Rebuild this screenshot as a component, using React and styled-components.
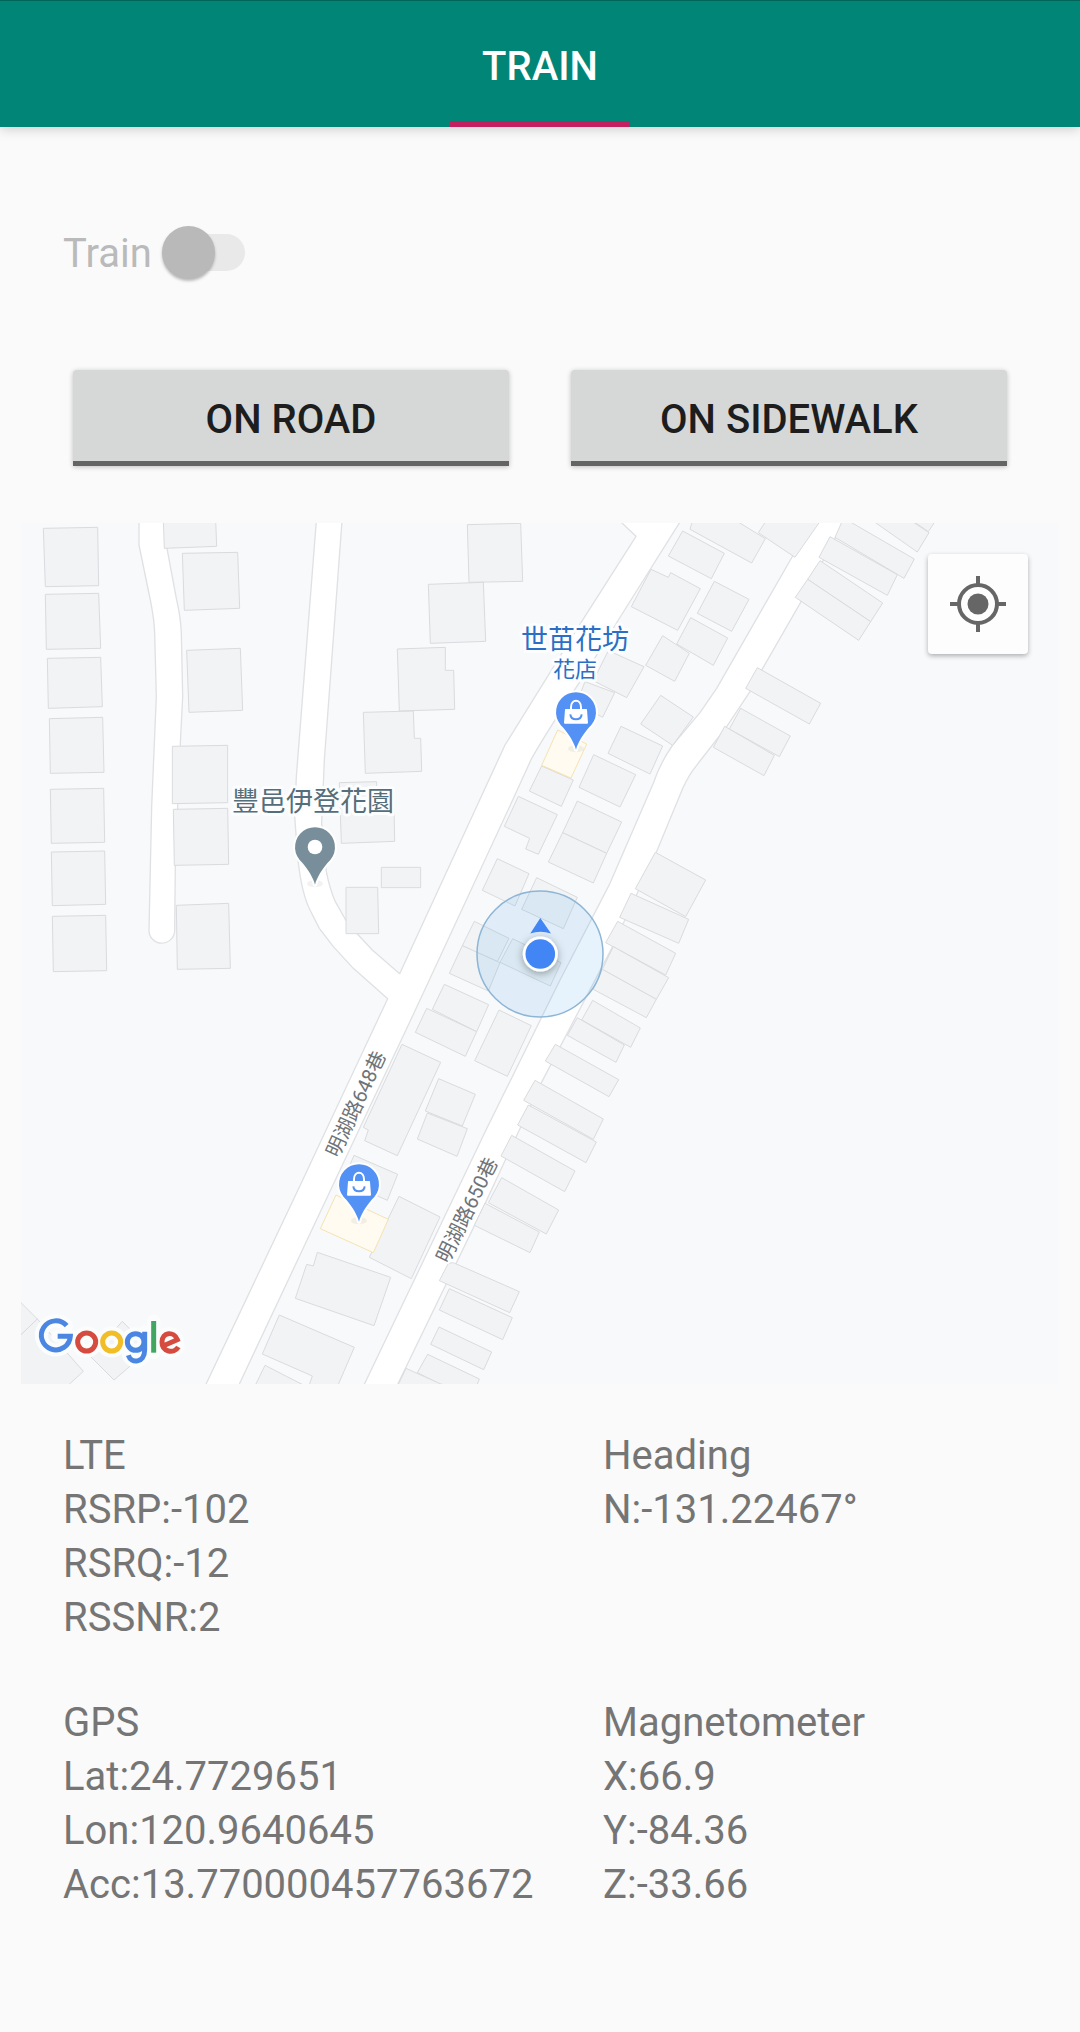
import React from "react";
import styled, { createGlobalStyle } from "styled-components";

const GlobalStyle = createGlobalStyle`
  *, *::before, *::after { box-sizing: border-box; }
  body {
    margin: 0;
    background: #fafafa;
    font-family: Roboto, "Noto Sans CJK TC", sans-serif;
    font-size: 40px;
    line-height: 54px;
    color: #757575;
  }
`;

const Page = styled.div`
  display: flex;
  flex-direction: column;
  min-height: 100vh;
`;

const TabBar = styled.nav`
  display: flex;
  justify-content: center;
  background: #018577;
  border-top: 1px solid #016459;
  box-shadow: 0 1px 12px rgba(0, 0, 0, 0.22);
`;

const Tab = styled.button`
  width: 180px;
  height: 126px;
  padding: 6px 0 0;
  border: 0;
  background: transparent;
  box-shadow: inset 0 -6px 0 #c4205f;
  color: #fff;
  font: inherit;
  font-weight: 500;
`;

const SwitchRow = styled.label`
  display: flex;
  align-items: center;
  gap: 10px;
  padding: 96px 63px 0;
  color: #bababa;
`;

const SwitchText = styled.span`
  padding-top: 4px;
`;

const Switch = styled.input`
  appearance: none;
  position: relative;
  width: 83px;
  height: 53px;
  margin: 0;

  &::before {
    content: "";
    position: absolute;
    inset: 8px 0 8px 16px;
    border-radius: 19px;
    background: #e9e9e9;
  }

  &::after {
    content: "";
    position: absolute;
    left: 0;
    top: 0;
    width: 53px;
    height: 53px;
    border-radius: 50%;
    background: #b9b9b9;
    box-shadow: 0 2px 3px rgba(0, 0, 0, 0.26);
  }
`;

const Actions = styled.div`
  display: grid;
  grid-template-columns: 1fr 1fr;
  gap: 62px;
  padding: 89px 73px 57px;
`;

const ActionButton = styled.button`
  height: 96px;
  padding: 9px 0 0;
  border: 0;
  border-bottom: 5px solid #646464;
  border-radius: 4px 4px 0 0;
  background: #d6d8d7;
  box-shadow: 0 1px 5px rgba(0, 0, 0, 0.24);
  color: #1d1d1d;
  font: inherit;
  font-weight: 500;
`;

const MapFrame = styled.section`
  position: relative;
  margin: 0 21px;
  aspect-ratio: 1038 / 861;
  overflow: hidden;
  background: #f8f9fb;
`;

const MapCanvas = styled.svg`
  display: block;
  width: 100%;
  height: 100%;
`;

const Buildings = styled.g`
  fill: #f1f3f4;
  stroke: #dadbde;

  polygon { vector-effect: non-scaling-stroke; }
`;

const Shops = styled(Buildings)`
  fill: #fffbf0;
  stroke: #f5e3b0;
`;

const Roads = styled.g`
  fill: #fff;
  stroke: #e0e1e4;
  stroke-width: 4;
  stroke-linejoin: round;
`;

const PlaceLabel = styled.text`
  font-size: 27px;
  fill: ${(p) => p.$color};
  text-anchor: middle;
  stroke: #fcfdfe;
  stroke-width: 6px;
  stroke-linejoin: round;
  paint-order: stroke;
  font-family: "Noto Sans CJK TC", sans-serif;
`;

const PlaceKind = styled.tspan`
  font-size: 22px;
`;

const StreetLabel = styled.text`
  font-size: 20px;
  fill: #6f7377;
  text-anchor: middle;
  dominant-baseline: central;
  stroke: #fff;
  stroke-width: 4px;
  stroke-linejoin: round;
  paint-order: stroke;
  font-family: Roboto, "Noto Sans CJK TC", sans-serif;
`;

const LocateButton = styled.button`
  position: absolute;
  top: 31px;
  right: 31px;
  display: grid;
  place-items: center;
  width: 100px;
  height: 100px;
  padding: 0;
  border: 0;
  border-radius: 4px;
  background: #fdfdfd;
  box-shadow: 0 2px 5px rgba(0, 0, 0, 0.3);
`;

const Readings = styled.section`
  display: grid;
  grid-template-columns: 1fr 1fr;
  row-gap: 51px;
  padding: 45px 0;
`;

const Reading = styled.div`
  padding-left: 63px;
`;

const Line = styled.p`
  margin: 0;
`;

// Each sheet covers one part of the district and is drawn at three units per pixel.
const SHEETS = [
  {
    x: 20, y: 520,
    lots: [
      "70,25 233,22 236,197 76,200", "76,223 236,220 242,385 79,388",
      "82,415 242,412 247,560 85,565", "88,596 248,592 252,757 91,760",
      "91,808 251,805 254,967 94,970", "94,996 254,993 257,1153 97,1157",
      "97,1189 257,1186 260,1352 100,1355", "430,0 587,0 590,79 433,85",
      "487,100 653,97 659,265 493,271", "500,391 661,385 668,571 507,577",
      "457,679 623,676 623,848 457,851", "460,868 623,865 626,1033 463,1036",
      "469,1156 626,1150 631,1345 472,1348", "978,1102 1073,1102 1076,1241 978,1241",
      "958,788 1070,785 1070,815 1121,812 1124,964 964,970",
    ],
  },
  {
    x: 380, y: 520,
    lots: [
      "262,14 422,10 428,184 267,187", "145,193 310,187 317,364 151,370",
      "52,387 196,382 196,451 221,451 224,568 58,573",
      "-50,577 100,573 103,655 122,655 125,754 -44,760", "4,1042 122,1042 122,1103 4,1103",
      "938,0 930,28 1115,129 1156,56 1065,0", "908,33 1033,100 994,176 865,108",
      "813,148 865,172 872,158 961,206 893,331 754,260",
      "932,293 1043,354 1000,436 890,372", "848,347 928,400 884,484 797,436",
      "685,392 792,440 740,533 640,482", "615,485 704,518 668,592 590,550",
      "842,526 940,591 878,676 782,612", "723,619 848,678 810,762 684,700",
      "485,738 580,780 544,859 448,813", "641,704 767,764 720,861 597,802",
      "415,829 532,884 475,1003 437,987 449,955 373,919",
      "592,843 725,906 680,1000 548,938", "548,938 680,1000 640,1089 505,1026",
      "352,1016 447,1061 405,1158 307,1111", "470,1073 592,1132 550,1226 425,1168",
    ],
    shops: ["533,630 620,672 573,774 485,736"],
  },
  {
    x: 700, y: 520,
    lots: [
      "200,0 175,38 285,112 363,0", "43,184 147,238 95,334 -8,280",
      "428,0 441,0 643,117 612,175 405,52", "390,50 592,164 562,226 357,112",
      "360,122 548,249 512,305 323,178", "323,178 512,305 476,361 286,232",
      "172,443 362,550 328,612 137,505", "122,565 271,648 238,710 88,627",
      "74,619 223,706 192,767 40,682", "515,0 652,96 687,38 630,0", "635,0 685,35 708,0",
    ],
  },
  {
    x: 380, y: 800,
    lots: [
      "283,364 387,415 352,485 247,437", "247,437 360,488 325,573 208,520",
      "398,416 543,488 511,558 360,487", "193,553 326,614 290,695 157,628",
      "140,625 290,695 256,769 106,697", "357,630 454,677 382,829 284,782",
      "826,157 977,240 917,350 766,266", "753,280 926,358 896,430 719,352",
      "713,364 887,460 857,525 677,428", "700,440 866,533 829,598 667,508",
      "667,508 829,598 799,653 640,568", "638,601 781,684 752,742 605,660",
      "592,653 733,735 708,787 562,706", "526,733 716,839 687,890 496,783",
    ],
  },
  {
    x: 300, y: 1020,
    lots: [
      "705,181 910,297 880,358 671,241", "685,255 889,366 858,428 653,315",
      "635,346 825,453 794,515 603,408", "605,473 776,570 739,642 565,548",
      "555,550 718,636 690,698 523,616", "460,728 658,815 629,878 418,782 445,730",
      "448,806 637,893 608,959 418,870", "417,921 575,996 551,1049 392,973",
      "383,1003 538,1077 525,1110 420,1092 352,1058", "318,1045 440,1100 292,1100",
      "306,73 422,127 292,407 194,362 205,330 190,322", "416,176 526,223 487,318 376,273",
      "382,279 502,326 471,409 352,357", "162,406 293,463 262,541 130,482",
      "297,529 420,591 334,776 208,712",
    ],
    shops: ["108,525 265,598 220,698 61,626"],
  },
  {
    x: 20, y: 1180,
    lots: [
      "892,217 1112,292 1062,437 826,355 860,253 880,258",
      "778,405 1003,502 952,620 866,620 877,588 727,522", "735,556 860,620 704,620",
      "-5,360 52,417 -5,472", "52,417 190,574 140,620 0,620 -5,472",
      "307,424 388,508 282,600 212,530",
    ],
  },
];

const sheetTransform = (s) => `translate(${s.x} ${s.y}) scale(${1 / 3})`;

function RoadNetwork() {
  return (
    <Roads>
      <g transform="translate(20 520) scale(.33333)">
        <path d="M357 -10V75L391 240Q403 300 404 340L409 530L403 670L395 860L387 1230A38 38 0 0 0 464 1232L466 1036L473 860L481 670L488 530L484 340Q482 290 469 235L441 85L433 -10Z" />
      </g>
      <g transform="translate(380 520) scale(.33333)">
        <path d="M1306 -10L1238 108L1010 505L960 578L878 675Q840 730 820 790L690 1090L540 1380L318 1830L-60 2620H40L318 2045L483 1690L695 1285L829 997L900 825Q918 780 938 752L960 723L1040 620L1110 515L1148 445L1262 247L1400 -10Z" />
        <path d="M708 -8L768 49L603 308L375 675L59 1361L-23 1290L-70 1240L-103 1200L-134 1145Q-150 1110 -161 1055L-175 910L-167 720L-113 -10H-190L-251 770L-256 890L-246 1020Q-235 1120 -210 1170L-182 1225L-140 1280L-80 1345L23 1436L-7 1500L-240 1997L-535 2620H-435L-240 2205L92 1500L148 1380L398 840L455 715Q510 620 610 470L715 300L910 -10Z" />
      </g>
    </Roads>
  );
}

function Pin({ x, y, color, shop }) {
  return (
    <g transform={`translate(${x} ${y}) scale(.33333)`}>
      <ellipse cx="0" cy="110" rx="24" ry="11" fill="#000" opacity=".05" />
      <path
        d="M0 113C-5 92 -20 69 -38 47A60 60 0 1 1 38 47C20 69 5 92 0 113Z"
        fill={color} stroke="#fff" strokeWidth="12" strokeLinejoin="round" paintOrder="stroke"
      />
      {shop ? (
        <>
          <path d="M-15 -6V-14C-15 -40 15 -40 15 -14V-6" fill="none" stroke="#fff" strokeWidth="6" />
          <path d="M-31 -9H31Q33 -9 33 -7L36 32Q36 35 33 35H-33Q-36 35 -36 32L-33 -7Q-33 -9 -31 -9Z" fill="#fff" />
          <path d="M-17 7C-15 27 15 27 17 7" fill="none" stroke={color} strokeWidth="6" />
        </>
      ) : (
        <circle r="22" fill="#fff" />
      )}
    </g>
  );
}

function LogoShapes({ colors, grow = 0 }) {
  const [blue, red, yellow, green] = colors;
  const w = 15 + grow;
  return (
    <g fill="none" strokeWidth={w} strokeLinejoin={grow ? "round" : "miter"} strokeLinecap={grow ? "round" : "butt"}>
      <path stroke={blue} d="M140 437A43.5 43.5 0 1 0 151 469H113" />
      <circle stroke={red} cx="200" cy="486" r="27" />
      <circle stroke={yellow} cx="275" cy="486" r="27" />
      <circle stroke={blue} cx="347" cy="486" r="25" />
      <path stroke={blue} d="M374 455V510C374 550 333 552 325 526" />
      <path stroke={green} d="M401 423V518" />
      <path stroke={red} d="M427 499L472 479C462 452 426 456 426 486C426 516 462 523 475 501" />
    </g>
  );
}

function GoogleMark() {
  return (
    <g role="img" aria-label="Google" transform="translate(20 1180) scale(.33333)">
      <LogoShapes colors={["#fbfdfd", "#fbfdfd", "#fbfdfd", "#fbfdfd"]} grow={24} />
      <LogoShapes colors={["#4a86e2", "#d64b3f", "#f1be27", "#43a660"]} />
    </g>
  );
}

function DistrictMap() {
  return (
    <MapFrame aria-label="Map">
      <MapCanvas viewBox="21 523 1038 861" preserveAspectRatio="xMidYMid slice">
        <defs>
          <filter id="dotShadow" x="-60%" y="-60%" width="220%" height="220%">
            <feDropShadow dx="0" dy="2" stdDeviation="4" floodOpacity=".35" />
          </filter>
        </defs>
        <RoadNetwork />
        {SHEETS.map((s) => (
          <g key={`${s.x}-${s.y}`} transform={sheetTransform(s)}>
            <Buildings>{s.lots.map((p) => <polygon key={p} points={p} />)}</Buildings>
            <Shops>{(s.shops || []).map((p) => <polygon key={p} points={p} />)}</Shops>
          </g>
        ))}

        <StreetLabel transform="translate(356 1104) rotate(-65)">明湖路648巷</StreetLabel>
        <StreetLabel transform="translate(467 1210) rotate(-64)">明湖路650巷</StreetLabel>

        <circle cx="540" cy="954" r="63" fill="#3ba0ea" fillOpacity=".13" stroke="#8db5d6" strokeWidth="1.5" />
        <path d="M540.3 918L530.3 933.5Q540.3 930 551 933.5Z" fill="#4285f4" />
        <circle cx="540.3" cy="954" r="17.5" fill="#fff" filter="url(#dotShadow)" />
        <circle cx="540.3" cy="954" r="14.8" fill="#4285f4" />

        <Pin x={315} y={847} color="#788f9b" />
        <Pin x={576} y={712} color="#5491f5" shop />
        <Pin x={359} y={1184} color="#5491f5" shop />

        <PlaceLabel x="313" y="811" $color="#546e7a">豐邑伊登花園</PlaceLabel>
        <PlaceLabel $color="#2a6fc4">
          <tspan x="575" y="649">世苗花坊</tspan>
          <PlaceKind x="575" y="677">花店</PlaceKind>
        </PlaceLabel>
        <GoogleMark />
      </MapCanvas>
      <LocateButton type="button" aria-label="My location">
        <svg width="56" height="56" viewBox="-28 -28 56 56" fill="none" stroke="#666" strokeWidth="4">
          <circle r="19" />
          <circle r="10.5" fill="#666" stroke="none" />
          <path d="M0 -28V-19M0 28V19M-28 0H-19M28 0H19" />
        </svg>
      </LocateButton>
    </MapFrame>
  );
}

const READINGS = [
  ["LTE", "RSRP:-102", "RSRQ:-12", "RSSNR:2"],
  ["Heading", "N:-131.22467°"],
  ["GPS", "Lat:24.7729651", "Lon:120.9640645", "Acc:13.770000457763672"],
  ["Magnetometer", "X:66.9", "Y:-84.36", "Z:-33.66"],
];

export default function App() {
  return (
    <Page>
      <GlobalStyle />
      <TabBar role="tablist">
        <Tab type="button" role="tab" aria-selected="true">TRAIN</Tab>
      </TabBar>
      <SwitchRow htmlFor="train">
        <SwitchText>Train</SwitchText>
        <Switch id="train" type="checkbox" role="switch" disabled />
      </SwitchRow>
      <Actions>
        <ActionButton type="button">ON ROAD</ActionButton>
        <ActionButton type="button">ON SIDEWALK</ActionButton>
      </Actions>
      <DistrictMap />
      <Readings>
        {READINGS.map((lines) => (
          <Reading key={lines[0]}>
            {lines.map((line) => <Line key={line}>{line}</Line>)}
          </Reading>
        ))}
      </Readings>
    </Page>
  );
}
